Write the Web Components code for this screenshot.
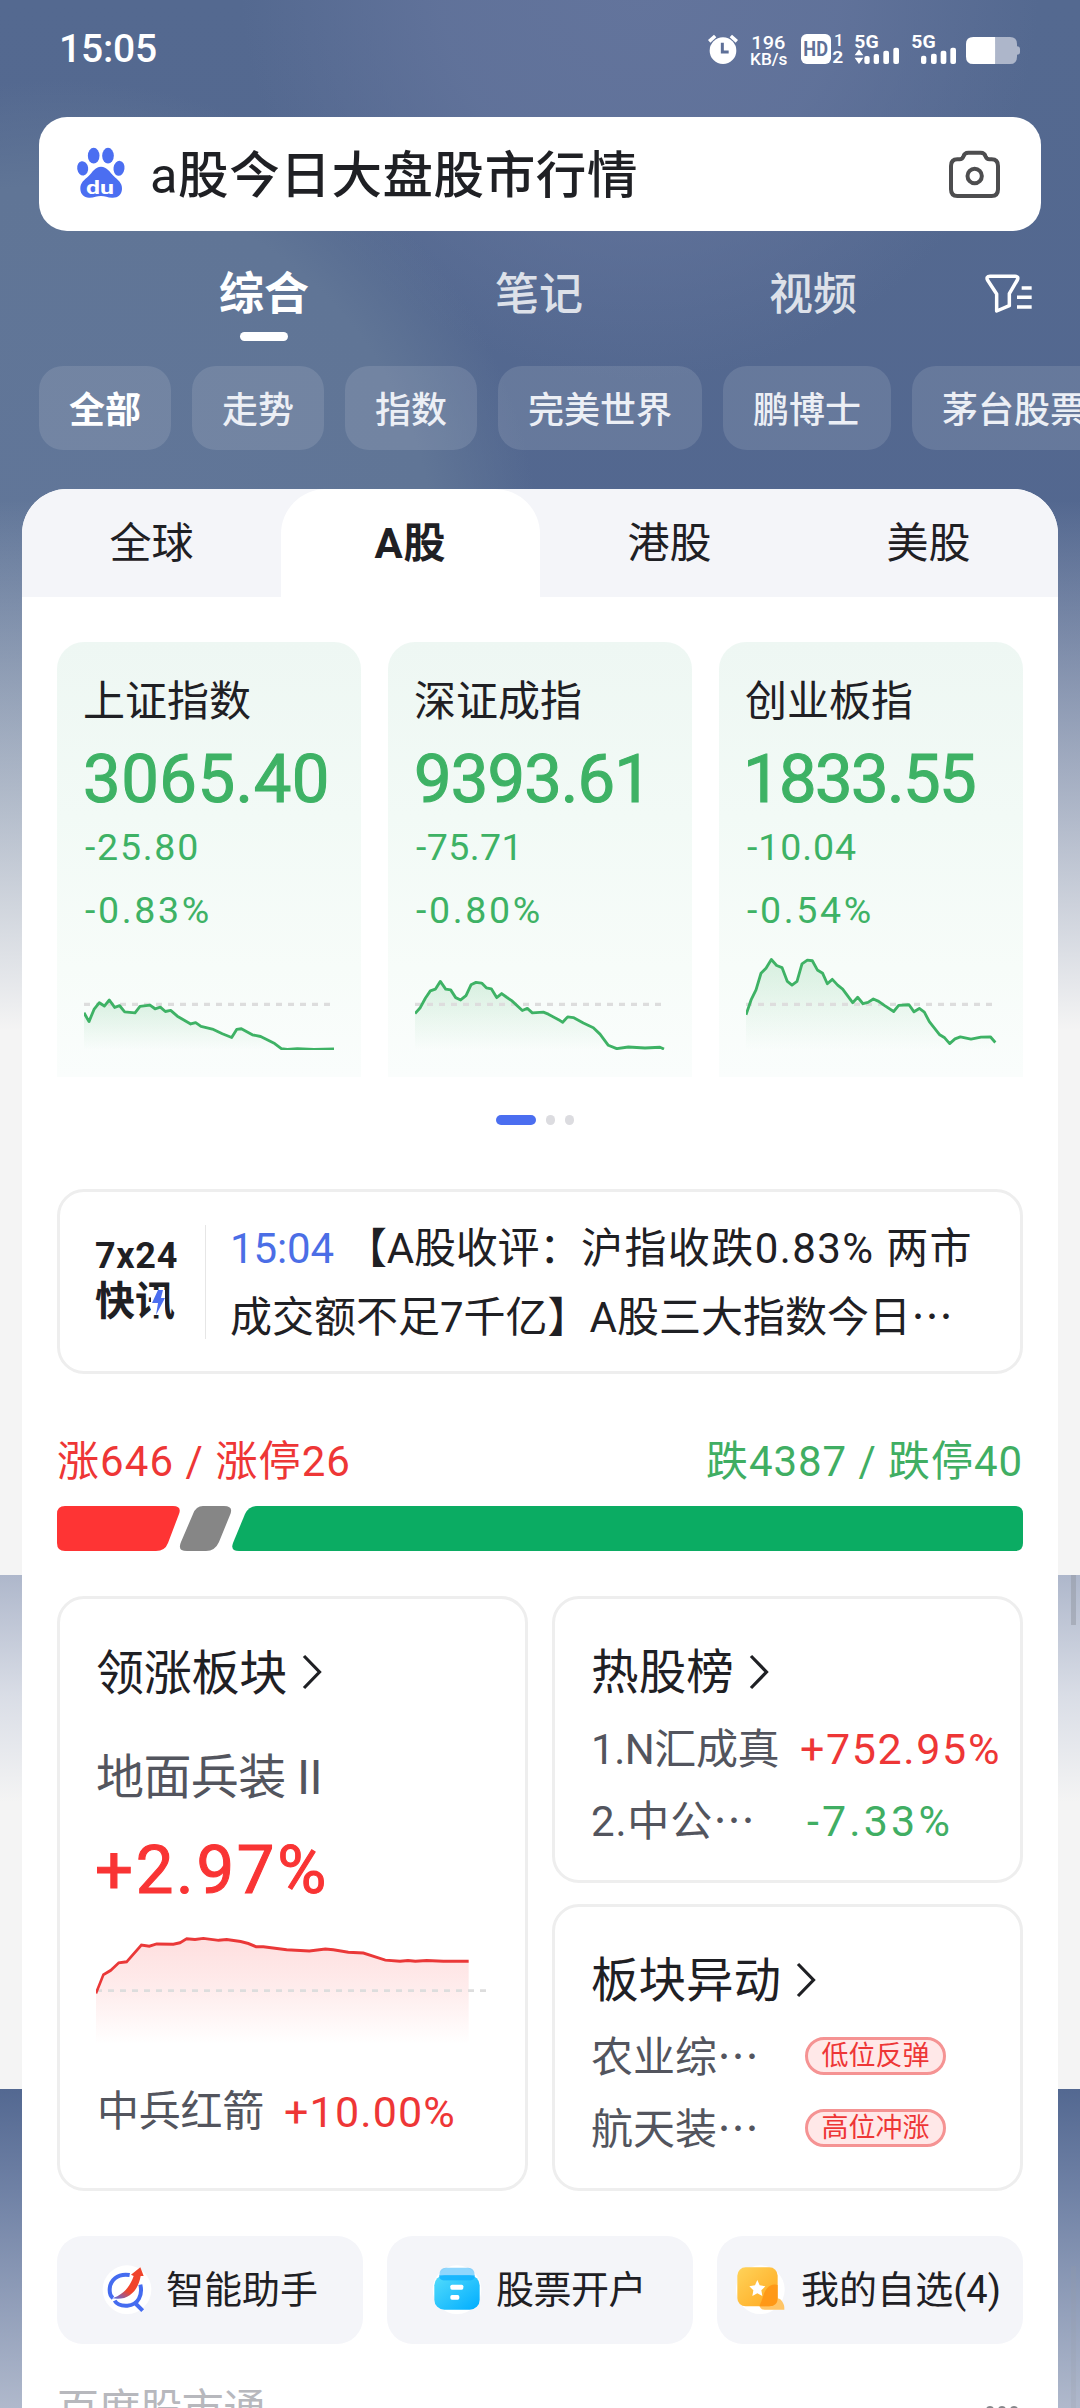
<!DOCTYPE html>
<html lang="zh-CN">
<head>
<meta charset="utf-8">
<title>a股今日大盘股市行情</title>
<style>
html,body{margin:0;padding:0}
body{width:1080px;height:2408px;overflow:hidden;font-family:Roboto,"Noto Sans CJK SC",sans-serif;color:#1f2024}
</style>
</head>
<body>
<stock-app></stock-app>
<script>
const FAMILY = 'Roboto,"Noto Sans CJK SC",sans-serif';
const define = (name, html, ready) => customElements.define(name, class extends HTMLElement {
  constructor() {
    super();
    const t = document.createElement('template');
    t.innerHTML = html;
    this.attachShadow({mode: 'open'}).appendChild(document.importNode(t.content, true));
  }
  connectedCallback() { if (ready) ready(this, this.shadowRoot); }
});

// Single line of text; `s` size, `w` line width, `f` weight, `c` colour, `t` top margin, `x` left margin
define('t-x', '<style>:host{display:block;white-space:pre;flex:none}:host([heavy]){-webkit-text-stroke:1.1px currentColor}</style><slot></slot>', el => {
  const s = +el.getAttribute('s'), f = el.getAttribute('f') || '400', w = +el.getAttribute('w');
  el.style.cssText = `font:${f} ${s}px/${s}px ${FAMILY};color:${el.getAttribute('c') || 'inherit'};margin-top:${el.getAttribute('t') || 0}px;margin-left:${el.getAttribute('x') || 0}px;`;
  if (w) {
    const g = document.createElement('canvas').getContext('2d');
    g.font = `${f} ${s}px ${FAMILY}`;
    const str = el.textContent;
    el.style.letterSpacing = ((w - g.measureText(str).width) / [...str].length).toFixed(3) + 'px';
    el.style.width = w + 'px';
  }
});

define('status-bar', `<style>
:host{display:flex;height:117px;box-sizing:border-box;padding:20px 20px 0 59px;justify-content:space-between;color:#fff}
svg{display:block}text{font-family:Roboto,sans-serif;fill:#fff}
</style>
<t-x s="39" w="98" f="500" t="10">15:05</t-x>
<svg width="380" height="60" viewBox="0 0 1140 180">
<g fill="#fff"><circle cx="129" cy="92" r="40"/><path d="M84 60L102 44L109 52L91 68ZM174 60L156 44L149 52L167 68Z"/></g>
<path d="M127 68V96H146" stroke="#5e7098" stroke-width="9" fill="none"/>
<text x="214" y="86" font-size="57" font-weight="500" textLength="102" lengthAdjust="spacingAndGlyphs">196</text>
<text x="210" y="135" font-size="47" font-weight="500" textLength="112" lengthAdjust="spacingAndGlyphs">KB/s</text>
<rect x="363" y="42" width="90" height="90" rx="17" fill="#fff"/>
<text x="370" y="108" font-size="58" font-weight="700" textLength="74" lengthAdjust="spacingAndGlyphs" style="fill:#5e7098">HD</text>
<text x="462" y="78" font-size="50" font-weight="500">1</text><text x="457" y="130" font-size="50" font-weight="700" textLength="33" lengthAdjust="spacingAndGlyphs">2</text>
<text x="523" y="85" font-size="56" font-weight="700" textLength="73" lengthAdjust="spacingAndGlyphs">5G</text>
<text x="694" y="85" font-size="56" font-weight="700" textLength="73" lengthAdjust="spacingAndGlyphs">5G</text>
<path fill="#fff" d="M537 88L550 106H524ZM537 132L550 113H524Z"/>
<g fill="#fff"><rect x="553" y="108" width="16" height="24" rx="6"/><rect x="581" y="102" width="16" height="30" rx="6"/><rect x="610" y="92" width="17" height="40" rx="6"/><rect x="640" y="83" width="17" height="49" rx="6"/>
<rect x="723" y="107" width="16" height="25" rx="6"/><rect x="753" y="101" width="17" height="31" rx="6"/><rect x="782" y="92" width="17" height="40" rx="6"/><rect x="811" y="83" width="17" height="49" rx="6"/></g>
<path fill="#adb6ca" d="M946 51H990Q1011 51 1011 72V79Q1020 79 1020 88V96Q1020 104 1011 104V110Q1011 132 990 132H946Z"/>
<path fill="#fff" d="M946 51H880Q858 51 858 72V110Q858 132 880 132H946Z"/>
</svg>`);

define('search-box', `<style>
:host{display:flex;height:114px;margin:0 39px;background:#fff;border-radius:28px;align-items:flex-start}
svg{display:block}.paw{margin:29px 0 0 37px}.q{margin-left:23px}.cam{margin:33px 0 0 auto;padding-right:41px}
</style>
<svg class="paw" width="51" height="54" viewBox="0 0 153 162">
<g fill="#4b6ef1"><ellipse cx="53" cy="29" rx="17.500" ry="23.500"/><ellipse cx="96" cy="29" rx="17.500" ry="23.500"/><ellipse cx="20" cy="67" rx="16.500" ry="21.500" transform="rotate(-8 20 67)"/><ellipse cx="129" cy="67" rx="16.500" ry="22.500" transform="rotate(8 129 67)"/>
<path d="M75 62C57 62 50 78 38 90C25 102 12 110 13 129C14 146 25 156 41 155C54 155 63 150 75 150C87 150 95 155 108 155C125 156 137 147 138 129C139 110 125 102 113 90C101 78 93 62 75 62Z"/></g>
<text x="30" y="143" font-family="Roboto" font-weight="700" font-size="57" fill="#fff" textLength="84" lengthAdjust="spacingAndGlyphs">du</text></svg>
<div class="q"><t-x s="50.500" w="488" t="34" f="450">a股今日大盘股市行情</t-x></div>
<svg class="cam" width="51" height="49" viewBox="0 0 153 147" fill="none" stroke="#4d4d4f" stroke-width="12">
<path d="M25 28H32Q40 28 43 20Q46 8 58 8H95Q107 8 110 20Q113 28 121 28H128Q147 28 147 48V118Q147 138 128 138H25Q6 138 6 118V48Q6 28 25 28Z"/><circle cx="77" cy="78" r="21.500"/></svg>`);

define('nav-tabs', `<style>
:host{display:flex;height:135px;padding-left:219px;box-sizing:border-box;color:#dde1e9}
.t{display:flex;flex-direction:column;align-items:center;width:90px;margin-right:185px}
.b{margin-right:184px}.c{margin-right:125px}
i{width:48px;height:9px;border-radius:5px;background:#fff;margin-top:15px}svg{margin-top:42px}
</style>
<div class="t"><t-x s="45" w="90" f="700" c="#fff" t="41">综合</t-x><i></i></div>
<div class="t b"><t-x s="44" w="88" f="500" t="42">笔记</t-x></div>
<div class="t c"><t-x s="44" w="88" f="500" t="42">视频</t-x></div>
<svg width="52" height="42" viewBox="0 0 156 126" fill="none" stroke="#fff" stroke-width="10.500" stroke-linejoin="round"><path d="M21 10H96Q108 10 103 21L79 62V98L41 114V63L14 22Q8 10 21 10Z"/><path d="M116 45H146M102 73H146M102 102H146"/></svg>`);

define('filter-chip', `<style>:host{display:flex;flex:none;height:84px;box-sizing:border-box;padding:24px 30px;border-radius:24px;background:rgba(255,255,255,.115)}</style><slot></slot>`);
define('chip-row', `<style>:host{display:flex;gap:21px;padding-left:39px;height:84px;overflow:hidden;color:#eceff5}</style>
<filter-chip><t-x s="36" w="72" f="700" c="#fff" t="3">全部</t-x></filter-chip>
<filter-chip><t-x s="36" w="72" f="500" t="3">走势</t-x></filter-chip>
<filter-chip><t-x s="36" w="72" f="500" t="3">指数</t-x></filter-chip>
<filter-chip><t-x s="36" w="144" f="500" t="3">完美世界</t-x></filter-chip>
<filter-chip><t-x s="36" w="108" f="500" t="3">鹏博士</t-x></filter-chip>
<filter-chip><t-x s="36" w="144" f="500" t="3">茅台股票</t-x></filter-chip>`);

define('market-tabs', `<style>
:host{display:grid;grid-template-columns:repeat(4,1fr);height:108px;background:#f4f5f9}
div{display:flex;justify-content:center;padding-top:34px}.on{background:#fff;border-radius:45px 45px 0 0}
</style>
<div><t-x s="42" w="84">全球</t-x></div><div class="on"><t-x s="42" w="72" f="700">A股</t-x></div><div><t-x s="42" w="84">港股</t-x></div><div><t-x s="42" w="84">美股</t-x></div>`);

define('index-card', `<style>
:host{display:flex;flex-direction:column;box-sizing:border-box;height:435px;padding:39px 0 0 26px;border-radius:27px 27px 0 0;background:linear-gradient(#eef7f3,#f2faf6 40%,#f7fcf9 75%,#fafdfc);color:#3eb265}
svg{margin:23px 0 0 1px;display:block}
</style><slot></slot>
<svg width="251" height="98" viewBox="0 0 753 290" preserveAspectRatio="none">
<defs><linearGradient id="g" x1="0" y1="0" x2="0" y2="1"><stop stop-color="#3eb265" stop-opacity=".17"/><stop offset="1" stop-color="#3eb265" stop-opacity="0"/></linearGradient></defs>
<path class="a" fill="url(#g)"/><path d="M0 155H745" stroke="#ddd" stroke-width="9" stroke-dasharray="18 18"/><path class="l" fill="none" stroke="#3eb265" stroke-width="8.500" stroke-linejoin="round"/></svg>`, (el, r) => {
  const p = el.getAttribute('pts').trim();
  r.querySelector('.l').setAttribute('d', 'M' + p);
  r.querySelector('.a').setAttribute('d', 'M' + p + 'L' + p.split(' ').pop().split(',')[0] + ',290L0,290Z');
});

define('page-dots', `<style>:host{display:flex;justify-content:center;gap:10px;height:10px;margin-top:38px;padding-right:10px}i{width:9px;border-radius:5px;background:#dcdce0}i.on{width:40px;background:#4b6ef0}</style><i class="on"></i><i></i><i></i>`);

define('news-box', `<style>
:host{display:flex;box-sizing:border-box;height:185px;margin-top:64px;border:3px solid #eee;border-radius:27px}
.l{width:145px;padding:46px 0 0 35px;box-sizing:border-box;position:relative}
.bolt{position:absolute;left:91px;top:98px;background:#fff}
.r{border-left:1px solid #e6e6e6;margin-top:33px;height:114px;padding-left:24px}
.row{display:flex}.b{margin-top:27px}
</style>
<div class="l"><t-x s="36" w="83" f="700">7x24</t-x><t-x s="40" w="80" f="700" t="8">快讯</t-x>
<svg class="bolt" width="14" height="25" viewBox="0 0 14 25"><path d="M7 0H12L10 8H14L5 25L7 13H1Z" fill="#4b6ef0"/></svg></div>
<div class="r"><div class="row"><t-x s="42" w="104" c="#4b6ee6" t="3">15:04</t-x><t-x s="42" w="236" t="3" x="11">【A股收评：</t-x><t-x s="42" w="392" t="3">沪指收跌0.83% 两市</t-x></div>
<div class="row b"><t-x s="42" w="681">成交额不足7千亿】A股三大指数今日</t-x><t-x s="42">⋯</t-x></div></div>`);

define('breadth-bar', `<style>:host{display:block;margin-top:67px}div{display:flex;justify-content:space-between}svg{display:block;margin-top:23px}</style>
<div><t-x s="42" w="294" c="#ee3636">涨646 / 涨停26</t-x><t-x s="42" w="317" c="#40ae63">跌4387 / 跌停40</t-x></div>
<svg width="966" height="45" viewBox="0 0 966 45">
<path fill="#fe3434" d="M8 0H116Q125 0 122 8L111 37Q108 45 99 45H8Q0 45 0 37V8Q0 0 8 0Z"/>
<path fill="#868686" d="M146 0H167Q177 0 173 9L162 36Q158 45 149 45H130Q120 45 124 36L136 8Q139 0 146 0Z"/>
<path fill="#0bac63" d="M200 0H958Q966 0 966 8V37Q966 45 958 45H182Q173 45 176 37L188 8Q192 0 200 0Z"/></svg>`);

define('line-card', `<style>:host{display:block;box-sizing:border-box;border:3px solid #eee;border-radius:27px;padding-left:36px}</style><slot></slot>`);
define('card-title', `<style>:host{display:flex;gap:var(--gap,14px)}svg{margin-top:55px}</style><slot></slot><svg width="20" height="36" viewBox="0 0 20 36" fill="none" stroke="#1f2024" stroke-width="3.200"><path d="M2 2L17.500 18L2 34"/></svg>`);
define('move-tag', `<style>:host{display:flex;box-sizing:border-box;width:141px;height:38px;justify-content:center;border:3px solid #f59393;border-radius:19px;background:#ffe8e8}</style><slot></slot>`);

define('sector-grid', `<style>
:host{display:grid;grid-template-columns:471px 471px;justify-content:space-between;height:595px;margin-top:45px}
.col{display:flex;flex-direction:column;justify-content:space-between}
.row{display:flex}.top,.bot{height:287px}
.gray{color:#53555e}svg{display:block}
</style>
<line-card><card-title style="--gap:15px"><t-x s="48" w="191" t="51">领涨板块</t-x></card-title>
<t-x s="48" w="226" t="56" c="#53555e">地面兵装 II</t-x>
<t-x heavy s="67" w="234" f="450" t="35" c="#f93434" x="-1">+2.97%</t-x>
<svg style="margin:32px 0 0 0" width="391" height="108" viewBox="168 900 1173 273" preserveAspectRatio="none">
<defs><linearGradient id="r" x1="0" y1="0" x2="0" y2="1"><stop stop-color="#f93434" stop-opacity=".16"/><stop offset=".5" stop-color="#f93434" stop-opacity=".09"/><stop offset="1" stop-color="#f93434" stop-opacity="0"/></linearGradient></defs>
<path fill="url(#r)" d="M168 1045L190 998 212 987 236 968 260 965 304 923 328 926 350 920 400 921 420 917 440 907 500 905 536 911 560 909 602 914 625 919 648 927 740 935 808 938 856 933 925 941 970 943 1036 961 1080 964 1104 962 1286 964V1173H168Z"/>
<path d="M168 1038H1341" stroke="#ddd" stroke-width="7" stroke-dasharray="18 18"/>
<path fill="none" stroke="#ea3838" stroke-width="7.500" d="M168 1045L190 998 212 987 236 968 260 965 304 923 328 926 350 920 400 921 420 917 440 907 465 909 490 906 536 911 560 909 602 914 625 919 648 927 670 927 740 935 808 938 856 933 880 935 925 941 970 943 1036 961 1080 964 1104 962 1126 964 1160 962 1210 964H1286"/></svg>
<div class="row" style="gap:20px;padding-left:1px"><t-x s="42" w="167" t="47" c="#53555e">中兵红箭</t-x><t-x s="43" w="172" t="47" c="#ee3636">+10.00%</t-x></div>
</line-card>
<div class="col">
<line-card class="top"><card-title style="--gap:15px"><t-x s="47.500" w="143" t="51">热股榜</t-x></card-title>
<div class="row gray"><t-x s="42" w="188" t="31">1.N汇成真</t-x><t-x s="43" w="201" t="30" x="21" c="#ee3636">+752.95%</t-x></div>
<div class="row gray"><t-x s="42" w="122" t="30">2.中公</t-x><t-x s="42" w="42" t="30">⋯</t-x><t-x s="43" w="146" t="29" x="52" c="#40ae63">-7.33%</t-x></div>
</line-card>
<line-card class="bot"><card-title style="--gap:15px"><t-x s="47.500" w="190" t="51">板块异动</t-x></card-title>
<div class="row gray"><t-x s="42" w="126" t="31">农业综</t-x><t-x s="42" w="42" t="31">⋯</t-x><move-tag style="margin:31px 0 0 46px"><t-x s="27" w="108" t="3" c="#ee3636">低位反弹</t-x></move-tag></div>
<div class="row gray"><t-x s="42" w="126" t="30">航天装</t-x><t-x s="42" w="42" t="30">⋯</t-x><move-tag style="margin:30px 0 0 46px"><t-x s="27" w="108" t="3" c="#ee3636">高位冲涨</t-x></move-tag></div>
</line-card></div>`);

define('quick-links', `<style>
:host{display:grid;grid-template-columns:repeat(3,306px);justify-content:space-between;height:108px;margin-top:45px}
div{display:flex;background:#f4f5f9;border-radius:26px;padding-left:45px}
.c{padding-left:19px}svg{margin-top:28px;flex:none}
</style>
<div><svg width="50" height="52" viewBox="-1 0 150 156"><defs><linearGradient id="ar" x1="0" y1="1" x2=".6" y2="0"><stop stop-color="#4b6ef0"/><stop offset=".4" stop-color="#f0442c"/></linearGradient></defs><circle cx="74" cy="77" r="73" fill="#fff"/>
<g fill="none" stroke="#456cf0" stroke-width="12"><path d="M82 33C45 27 22 50 22 78C22 92 26 98 32 102"/><path d="M114 62C121 92 109 123 75 125C56 126 43 121 37 110M101 120L121 140"/></g>
<path fill="url(#ar)" d="M114 10L86 32L94 36C84 66 64 92 30 103C80 112 108 78 115 36L124 36Z"/></svg><t-x s="38" w="152" t="35" x="14">智能助手</t-x></div>
<div><svg width="50" height="52" viewBox="0 0 150 156"><defs><linearGradient id="bl" x1="0" y1="0" x2="1" y2="1"><stop stop-color="#54dcfb"/><stop offset="1" stop-color="#00adff"/></linearGradient></defs><circle cx="75" cy="77" r="73" fill="#fff"/><rect x="7" y="34" width="136" height="103" rx="30" fill="url(#bl)"/><path d="M22 34Q22 11 42 11H108Q128 11 128 34V38Q128 49 108 49H42Q22 49 22 38Z" fill="#1faefb" opacity=".5"/><path d="M22 34H128V38Q128 49 108 49H42Q22 49 22 38Z" fill="#10b4ff" opacity=".7"/><g fill="#fff"><rect x="55" y="62" width="39" height="15" rx="5"/><rect x="55" y="93" width="27" height="14" rx="5"/></g></svg><t-x s="38" w="150" t="35" x="14">股票开户</t-x></div>
<div class="c"><svg width="50" height="52" viewBox="0 0 150 156"><defs><linearGradient id="or" x1="0" y1="0" x2="1" y2="1"><stop stop-color="#ffd35a"/><stop offset="1" stop-color="#ffa81f"/></linearGradient></defs><circle cx="73" cy="77" r="73" fill="#fff"/><path d="M94 94L132 105C145 118 145 128 145 137H86Q70 137 70 120Z" fill="#ffc566"/><rect x="4" y="10" width="121" height="117" rx="25" fill="url(#or)"/><path d="M125 63V102Q125 127 100 127H70Q77 111 82 95C88 72 105 56 125 63Z" fill="#ff9414" opacity=".85"/><path fill="#fff" d="M64 48L71 64L88 67L76 79L79 96L64 88L49 96L52 79L40 67L57 64Z"/></svg><t-x s="38" w="200" t="35" x="15">我的自选(4)</t-x></div>`);

define('panel-foot', `<style>:host{display:flex;justify-content:space-between;margin-top:45px;color:#b7b8bd}svg{margin-top:15px}</style><t-x s="42" w="208">百度股市通</t-x><svg width="38" height="12" viewBox="0 0 38 12" fill="#85868a"><circle cx="5" cy="6" r="4"/><circle cx="17" cy="6" r="4"/><circle cx="29" cy="6" r="4"/></svg>`);

define('market-panel', `<style>
:host{display:block;margin:39px 22px 0;background:#fff;border-radius:45px 45px 0 0;overflow:hidden}
.body{padding:45px 35px 0}.cards{display:grid;grid-template-columns:repeat(3,1fr);gap:27px}
</style>
<market-tabs></market-tabs>
<div class="body">
<div class="cards">
<index-card pts="0,180 15,206 30,170 46,150 61,160 76,142 92,164 107,159 122,177 153,180 168,161 198,157 213,168 229,163 244,176 260,173 280,190 320,213 335,209 351,220 385,228 415,242 443,253 458,229 472,227 505,245 530,250 548,259 572,271 592,286 610,288 640,286 690,288 750,287">
<t-x s="42" w="168" c="#1f2024">上证指数</t-x><t-x heavy s="67" w="247" f="450" t="23">3065.40</t-x><t-x s="37.500" w="115" t="15.500" x="2">-25.80</t-x><t-x s="37.500" w="127" t="25.500" x="2">-0.83%</t-x></index-card>
<index-card pts="0,182 15,166 31,137 46,115 61,110 76,87 92,110 107,112 122,135 137,142 153,129 168,97 183,90 200,92 214,106 229,109 245,135 260,123 275,134 290,144 322,173 337,167 352,180 385,178 400,184 435,203 443,208 458,192 475,194 505,210 535,224 555,243 580,276 605,286 640,281 690,284 735,282 747,287">
<t-x s="42" w="168" c="#1f2024">深证成指</t-x><t-x heavy s="67" w="237" f="450" t="23">9393.61</t-x><t-x s="37.500" w="107" t="15.500" x="2">-75.71</t-x><t-x s="37.500" w="127" t="25.500" x="2">-0.80%</t-x></index-card>
<index-card pts="0,186 16,140 30,112 45,63 60,48 76,22 92,40 108,46 124,87 138,98 153,87 168,35 184,24 199,26 214,53 230,63 244,94 259,81 275,98 290,110 320,150 335,134 351,153 366,149 382,139 398,146 415,158 443,176 458,158 489,156 504,177 520,167 535,178 550,206 580,244 596,254 611,271 627,257 643,251 675,258 705,252 733,251 748,268">
<t-x s="42" w="168" c="#1f2024">创业板指</t-x><t-x heavy s="67" w="232" f="450" t="23" x="-2">1833.55</t-x><t-x s="37.500" w="110" t="15.500" x="2">-10.04</t-x><t-x s="37.500" w="127" t="25.500" x="2">-0.54%</t-x></index-card>
</div>
<page-dots></page-dots><news-box></news-box><breadth-bar></breadth-bar><sector-grid></sector-grid><quick-links></quick-links><panel-foot></panel-foot>
</div>`);

define('stock-app', `<style>
:host{display:block;position:relative;width:1080px;height:2408px;overflow:hidden;background:
linear-gradient(rgba(244,244,244,0) 500px,rgba(244,244,244,.55) 800px,#f4f4f4 1030px) 0 0/1080px 1040px no-repeat,
radial-gradient(circle 480px at 60px 560px,#617699 0,#607596 78%,rgba(96,117,149,0) 100%) 0 0/1080px 1040px no-repeat,
radial-gradient(circle 400px at 640px -20px,#63749c 0,rgba(99,116,156,.8) 50%,rgba(99,116,156,0) 100%) 0 0/1080px 1040px no-repeat,
linear-gradient(#546990,#52668f) 0 0/1080px 1040px no-repeat,
linear-gradient(#aeb7cb,#d9dde6 120px,#f4f4f4 227px) 0 1575px/1080px 514px no-repeat,
linear-gradient(#536891,#6f81a5 101px,#b0b9cc 319px) 0 2089px/1080px 319px no-repeat,#f4f4f4}
i{position:absolute;left:1071px;width:5px;background:rgba(150,155,165,.55)}
</style>
<status-bar></status-bar><search-box></search-box><nav-tabs></nav-tabs><chip-row></chip-row><market-panel></market-panel>
<i style="top:1575px;height:50px"></i><i style="top:2266px;height:142px;opacity:.35"></i>`);
</script>
</body>
</html>
